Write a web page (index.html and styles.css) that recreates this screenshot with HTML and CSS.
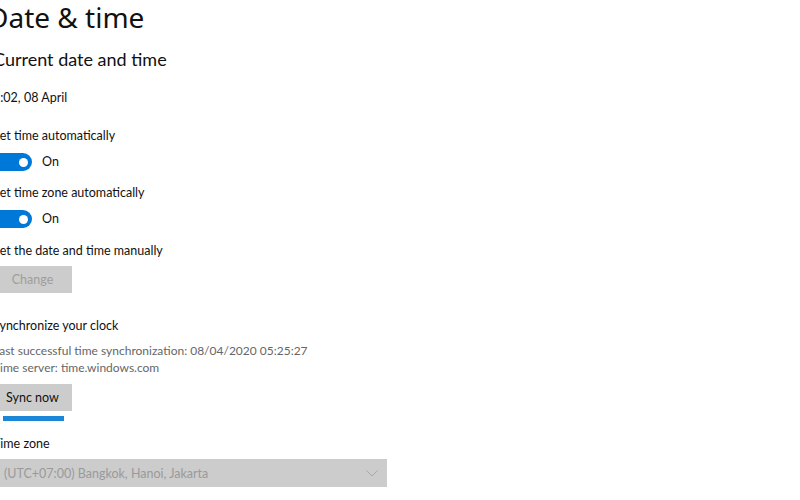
FILE: index.html
```html
<!DOCTYPE html>
<html lang="en">
<head>
<meta charset="utf-8">
<title>Date & time</title>
<link rel="stylesheet" href="styles.css">
</head>
<body>
<main class="content">
  <h1 class="title">Date &amp; time</h1>
  <h2 class="subtitle">Current date and time</h2>
  <p class="text now">9:02, 08 April</p>

  <p class="text label first">Set time automatically</p>
  <div class="toggle-row">
    <span class="toggle"><span class="knob"></span></span>
    <span class="text">On</span>
  </div>

  <p class="text label">Set time zone automatically</p>
  <div class="toggle-row">
    <span class="toggle"><span class="knob"></span></span>
    <span class="text">On</span>
  </div>

  <p class="text label manual">Set the date and time manually</p>
  <button class="btn disabled" type="button">Change</button>

  <p class="text label sync">Synchronize your clock</p>
  <div class="info">
    <div>Last successful time synchronization: 08/04/2020 05:25:27</div>
    <div>Time server: time.windows.com</div>
  </div>
  <button class="btn sync-btn" type="button">Sync now</button>
  <div class="progress"></div>

  <p class="text label tz">Time zone</p>
  <div class="select">
    <span>(UTC+07:00) Bangkok, Hanoi, Jakarta</span>
    <svg class="chev" width="12" height="7" viewBox="0 0 12 7"><path d="M0.5 0.5 L6 6 L11.5 0.5" fill="none" stroke="#a9a9a9" stroke-width="1"/></svg>
  </div>
</main>
</body>
</html>
```

FILE: styles.css
```css
html, body {
  margin: 0;
  padding: 0;
  background: #ffffff;
  overflow: hidden;
}
body {
  width: 800px;
  height: 500px;
  font-family: "Lato", "Noto Sans", sans-serif;
  color: #111;
}
.content {
  margin-left: -7px;
  display: flex;
  flex-direction: column;
  align-items: flex-start;
}
.title {
  margin: -1px 0 0 -5px;
  font-family: "Noto Sans", sans-serif;
  font-size: 28px;
  font-weight: 400;
  line-height: 36px;
}
.subtitle {
  margin: 10px 0 0 0;
  font-size: 18px;
  font-weight: 400;
  line-height: 28px;
}
.text {
  margin: 0;
  font-size: 12.5px;
  line-height: 20px;
}
.now { margin-top: 15px; }
.label { margin-top: 12px; }
.label.first { margin-top: 18px; }
.label.manual { margin-top: 13px; }
.label.sync { margin-top: 23px; }
.label.tz { margin-top: 13px; }
.toggle-row {
  margin: 7px 0 0 -1px;
  display: flex;
  align-items: center;
  gap: 10px;
  height: 18px;
}
.toggle {
  width: 40px;
  height: 18px;
  border-radius: 9px;
  background: #0078d7;
  display: flex;
  align-items: center;
  justify-content: flex-end;
  padding-right: 4px;
  box-sizing: border-box;
}
.knob {
  width: 9px;
  height: 9px;
  border-radius: 50%;
  background: #fff;
}
.btn {
  margin: 5px 0 0 0;
  width: 79px;
  height: 27px;
  border: none;
  background: #cccccc;
  font-family: inherit;
  font-size: 12.5px;
  color: #111;
  padding: 0;
}
.btn.disabled { color: #9e9e9e; }
.info {
  margin-top: 6px;
  font-size: 12px;
  line-height: 17px;
  color: #666;
}
.sync-btn { margin-top: 8px; }
.progress {
  margin: 5px 0 0 10px;
  width: 61px;
  height: 5px;
  background: #1c87d6;
}
.select {
  margin: 5px 0 0 0;
  width: 394px;
  height: 28px;
  background: #cccccc;
  color: #9a9a9a;
  font-size: 12.5px;
  display: flex;
  align-items: center;
  justify-content: space-between;
  padding: 0 9px 0 11px;
  box-sizing: border-box;
}
.chev { display: block; }
```
